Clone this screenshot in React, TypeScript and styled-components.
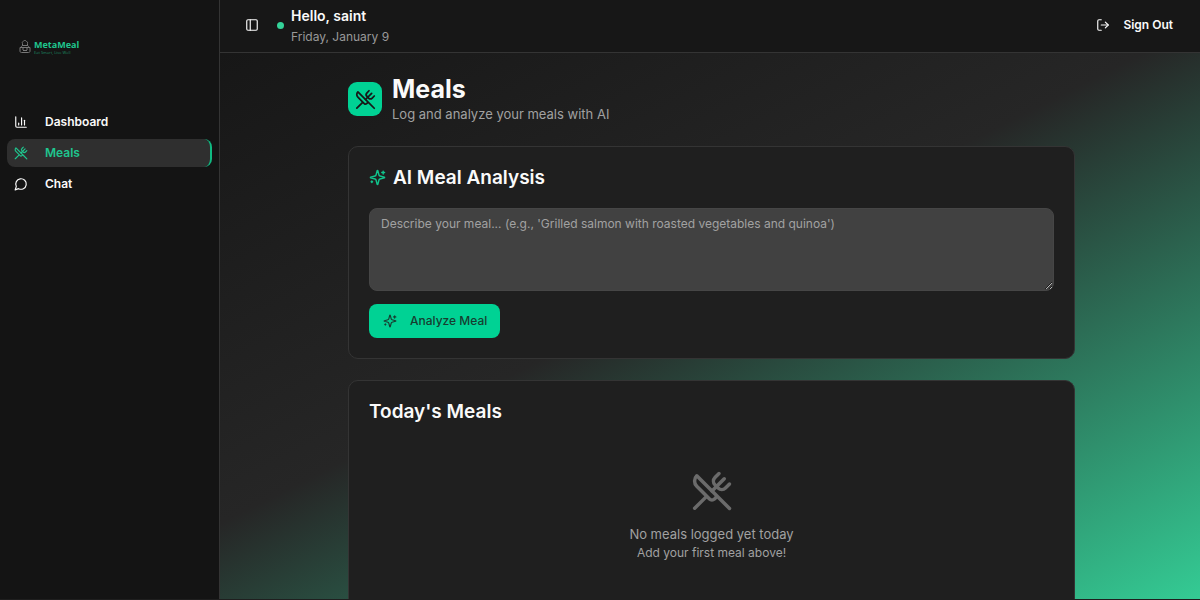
import React from "react";
import styled, { createGlobalStyle } from "styled-components";
import { ChartColumn, LogOut, PanelLeft, UtensilsCrossed } from "lucide-react";

const Global = createGlobalStyle`
  *, *::before, *::after { box-sizing: border-box; }
  body { margin: 0; background: #141414; color: #fafafa; font-family: Inter, "Liberation Sans", sans-serif; font-size: 12px; line-height: 18px; }
  h1, h2, p { margin: 0; }
  button, textarea { font: inherit; color: inherit; }
  svg { flex: none; }
`;

const Shell = styled.div`
  display: grid;
  grid-template-columns: 220px minmax(0, 1fr);
  height: 100vh;
  overflow: hidden;
  border-bottom: 1px solid #1f1f1f;
`;

const Sidebar = styled.aside`
  display: flex;
  flex-direction: column;
  gap: 53px;
  padding: 38px 7px 0;
  background: #141414;
  border-right: 1px solid #343434;
`;

const Brand = styled.a`
  display: flex;
  align-items: center;
  gap: 3px;
  height: 17px;
  padding-left: 12px;
  color: #1fc58e;
  text-decoration: none;
`;

const BrandText = styled.span`
  display: grid;
  font-family: "Open Sans", sans-serif;
`;

const BrandName = styled.span`
  font-size: 9px;
  line-height: 11px;
  font-weight: 700;
`;

const Tagline = styled.span`
  font-size: 4px;
  line-height: 5px;
  color: #1c8a62;
`;

const Nav = styled.nav`
  display: grid;
  gap: 3px;
`;

const NavLink = styled.a<{ $active?: boolean }>`
  display: flex;
  align-items: center;
  gap: 17px;
  height: 28px;
  padding-left: 7px;
  border-radius: 8px;
  border-right: 2px solid ${(p) => (p.$active ? "#10b981" : "transparent")};
  background: ${(p) => (p.$active ? "#2f2f2f" : "transparent")};
  color: ${(p) => (p.$active ? "#1fc58e" : "#fafafa")};
  font-weight: 600;
  text-decoration: none;
`;

const Column = styled.div`
  display: flex;
  flex-direction: column;
  min-height: 0;
`;

const Topbar = styled.header`
  display: flex;
  align-items: center;
  flex: none;
  height: 53px;
  padding: 0 27px 2px 25px;
  background: #171717;
  border-bottom: 1px solid #343434;
`;

const IconButton = styled.button`
  display: flex;
  padding: 0;
  border: 0;
  background: none;
`;

const StatusDot = styled.span`
  width: 7px;
  height: 7px;
  margin: 0 7px 0 18px;
  border-radius: 50%;
  background: #34d399;
`;

const Greeting = styled.p`
  font-size: 14px;
  line-height: 22px;
  font-weight: 600;
`;

const Today = styled.p`
  line-height: 20px;
  color: #999;
`;

const GreetingBlock = styled.div`
  padding-top: 2px;
`;

const SignOut = styled.button`
  display: flex;
  align-items: center;
  gap: 13px;
  margin-left: auto;
  padding: 0;
  border: 0;
  background: none;
  font-weight: 600;
`;

const Content = styled.main`
  flex: 1;
  min-height: 0;
  overflow: hidden;
  padding: 20px 25px 0 28px;
  background: linear-gradient(153deg, #171717, #262626 45%, #34cb94);
`;

const Inner = styled.div`
  display: grid;
  gap: 21px;
  max-width: 727px;
  margin: 0 auto;
`;

const PageHead = styled.div`
  display: flex;
  align-items: center;
  gap: 10px;
  height: 52px;
`;

const Badge = styled.span`
  display: grid;
  place-items: center;
  width: 34px;
  height: 34px;
  border-radius: 9px;
  background: #00d294;
  color: #171717;
`;

const Title = styled.h1`
  font-size: 25px;
  line-height: 30px;
  font-weight: 700;
`;

const Subtitle = styled.p`
  font-size: 13px;
  line-height: 20px;
  color: #a1a1a1;
`;

const Card = styled.section`
  padding: 20px;
  border: 1px solid #343434;
  border-radius: 10px;
  background: #1f1f1f;
`;

const CardTitle = styled.h2`
  display: flex;
  align-items: center;
  gap: 7px;
  font-size: 19px;
  line-height: 21px;
  font-weight: 600;
  svg { color: #10c48c; }
`;

const MealInput = styled.textarea`
  display: block;
  width: 100%;
  height: 83px;
  margin: 20px 0 13px;
  padding: 6px 11px;
  border: 1px solid #464646;
  border-radius: 8px;
  background: #414141;
  resize: vertical;
  &::placeholder { color: #a1a1a1; opacity: 1; }
`;

const Analyze = styled.button`
  display: flex;
  align-items: center;
  gap: 13px;
  height: 34px;
  padding: 0 13px 0 14px;
  border: 0;
  border-radius: 8px;
  background: #00d294;
  color: #173d30;
  font-weight: 500;
`;

const Empty = styled.div`
  display: grid;
  justify-items: center;
  padding: 48px 0 60px;
  color: #a1a1a1;
  svg { color: #6b6b6b; margin-bottom: 12px; }
`;

const EmptyTitle = styled.p`
  font-size: 13px;
  line-height: 20px;
`;

const Stroke = styled.svg`
  fill: none;
  stroke: currentColor;
  stroke-width: 2;
  stroke-linecap: round;
  stroke-linejoin: round;
`;

function SparklesIcon({ size }: { size: number }) {
  return (
    <Stroke width={size} height={size} viewBox="0 0 24 24" aria-hidden="true">
      <path d="M9.937 15.5A2 2 0 0 0 8.5 14.063l-6.135-1.582a.5.5 0 0 1 0-.962L8.5 9.936A2 2 0 0 0 9.937 8.5l1.582-6.135a.5.5 0 0 1 .963 0L14.063 8.5A2 2 0 0 0 15.5 9.937l6.135 1.581a.5.5 0 0 1 0 .964L15.5 14.063a2 2 0 0 0-1.437 1.437l-1.582 6.135a.5.5 0 0 1-.963 0z" />
      <path d="M20 3v4M22 5h-4M4 17v2M5 18H3" />
    </Stroke>
  );
}

function ChatIcon() {
  return (
    <Stroke width="14" height="14" viewBox="0 0 24 24" aria-hidden="true">
      <path d="M7.9 20A9 9 0 1 0 4 16.1L2 22Z" />
    </Stroke>
  );
}

function PotLogo() {
  return (
    <svg width="12" height="13" viewBox="0 0 24 26" fill="none" stroke="#777" strokeWidth="2" aria-hidden="true">
      <path d="M7 11V7a3 3 0 0 1 1-4 4 4 0 0 1 7 0 3 3 0 0 1 2 4v4M7 11h10M4 15c1-3 2-4 4-4h8c2 0 3 1 4 4M2 15h20v7c0 2-1 3-3 3H5c-2 0-3-1-3-3zM6 18h4M14 18h4M8 21h8" />
    </svg>
  );
}

export default function App() {
  return (
    <>
      <Global />
      <Shell>
        <Sidebar>
          <Brand href="#">
            <PotLogo />
            <BrandText>
              <BrandName>MetaMeal</BrandName>
              <Tagline>Eat Smart, Live Well</Tagline>
            </BrandText>
          </Brand>
          <Nav>
            <NavLink href="#dashboard"><ChartColumn size={14} />Dashboard</NavLink>
            <NavLink href="#meals" $active aria-current="page"><UtensilsCrossed size={14} />Meals</NavLink>
            <NavLink href="#chat"><ChatIcon />Chat</NavLink>
          </Nav>
        </Sidebar>
        <Column>
          <Topbar>
            <IconButton aria-label="Toggle sidebar"><PanelLeft size={14} /></IconButton>
            <StatusDot />
            <GreetingBlock>
              <Greeting>Hello, saint</Greeting>
              <Today>Friday, January 9</Today>
            </GreetingBlock>
            <SignOut><LogOut size={14} />Sign Out</SignOut>
          </Topbar>
          <Content>
            <Inner>
              <PageHead>
                <Badge><UtensilsCrossed size={21} /></Badge>
                <div>
                  <Title>Meals</Title>
                  <Subtitle>Log and analyze your meals with AI</Subtitle>
                </div>
              </PageHead>
              <Card>
                <CardTitle><SparklesIcon size={17} />AI Meal Analysis</CardTitle>
                <MealInput aria-label="Meal description" placeholder="Describe your meal... (e.g., 'Grilled salmon with roasted vegetables and quinoa')" />
                <Analyze><SparklesIcon size={14} />Analyze Meal</Analyze>
              </Card>
              <Card>
                <CardTitle>Today's Meals</CardTitle>
                <Empty>
                  <UtensilsCrossed size={42} />
                  <EmptyTitle>No meals logged yet today</EmptyTitle>
                  <p>Add your first meal above!</p>
                </Empty>
              </Card>
            </Inner>
          </Content>
        </Column>
      </Shell>
    </>
  );
}
